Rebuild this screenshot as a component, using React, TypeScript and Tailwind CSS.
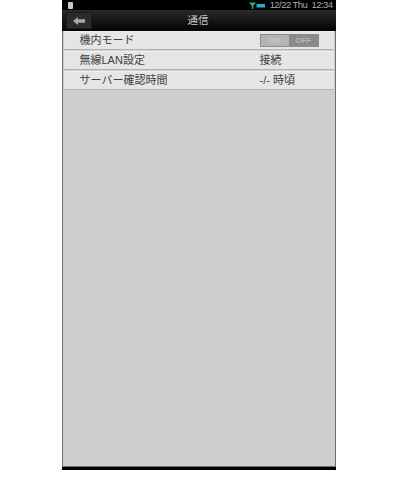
import { ReactNode } from "react";

const jpFont = "font-['Liberation_Sans','Noto_Sans_CJK_JP',sans-serif]";

function Row({ label, children }: { label: string; children: ReactNode }) {
	return (
		<div className="mx-[1px] flex h-[19px] items-center border-b border-b-[#b4b4b4] border-t border-t-[#f0f0f0] bg-[#e5e5e5] pl-[16px] text-[11px] text-[#3f3f3f]">
			<span className="w-[180px] shrink-0 whitespace-nowrap">{label}</span>
			{children}
		</div>
	);
}

export default function App() {
	return (
		<div className={`flex h-[478px] w-[400px] justify-center bg-white ${jpFont}`}>
			<div className="ml-[-3px] flex h-[470px] w-[274px] flex-col bg-black">
				{/* Status bar */}
				<div className="flex h-[10px] items-center justify-between pr-[3px]">
					<span className="ml-[6px] h-[7px] w-[5px] rounded-[1px] bg-[#c9c9c9]" />
					<div className="flex items-center gap-[5px]">
						<svg width="16" height="7" viewBox="0 0 16 7">
							<path d="M0 0.5h7L4.2 4V7H2.8V4z" fill="#1fae96" />
							<rect x="7.5" y="2" width="8.5" height="3.5" fill="#1fb4c4" />
						</svg>
						<span className="whitespace-nowrap text-[9.5px] leading-[10px] tracking-[-0.55px] text-[#a8a8a8]">12/22 Thu&nbsp; 12:34</span>
					</div>
				</div>

				{/* Title bar */}
				<div className="flex h-[21px] items-center bg-gradient-to-b from-[#2a2a2a] to-[#050505]">
					<div className="ml-[4px] flex h-[17px] w-[26px] items-center justify-center rounded-[1px] border border-[#1c1c1c] bg-[#2b2b2b]">
						<svg width="12" height="8" viewBox="0 0 12 8">
							<path d="M0 4L5 0V2.2H12V5.8H5V8z" fill="#a8a8a8" />
						</svg>
					</div>
					<span className="ml-[96px] text-[10.5px] text-[#c8c8c8]">通信</span>
				</div>

				{/* Settings list */}
				<div className="flex flex-1 flex-col gap-[1px] border-x border-[#6e6e6e] bg-[#cfcfcf]">
					<Row label="機内モード">
						<div className="flex h-[13px] w-[59px] border border-[#8c8c8c] text-[8px] font-bold leading-[9px]">
							<span className="flex w-[29px] items-center justify-center bg-[#b4b4b4] text-[#c4c4c4]">ON</span>
							<span className="flex w-[29px] items-center justify-center bg-[#8a8a8a] text-[#b8b8b8]">OFF</span>
						</div>
					</Row>
					<Row label="無線LAN設定">
						<span className="whitespace-nowrap">接続</span>
					</Row>
					<Row label="サーバー確認時間">
						<span className="whitespace-nowrap">-/- 時頃</span>
					</Row>
				</div>

				{/* Bottom edge */}
				<div className="h-[4px] border-t border-[#6e6e6e] bg-black" />
			</div>
		</div>
	);
}
